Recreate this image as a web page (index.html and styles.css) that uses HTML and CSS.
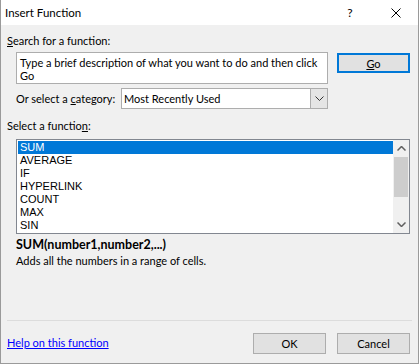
FILE: index.html
```html
<!DOCTYPE html>
<html lang="en">
<head>
    <meta charset="UTF-8">
    <title>Insert Function</title>
    <link rel="stylesheet" href="styles.css">
</head>
<body>
    <div class="window">
        <div class="titlebar">
            <span class="title">Insert Function</span>
            <span class="help">?</span>
            <span class="close">
                <svg width="10" height="10" viewBox="0 0 10 10"><path d="M0.5 0.5 L9.5 9.5 M9.5 0.5 L0.5 9.5" stroke="#000" stroke-width="1" fill="none"/></svg>
            </span>
        </div>
        <div class="content">
            <div class="label"><u>S</u>earch for a function:</div>
            <div class="search-row">
                <div class="textbox">Type a brief description of what you want to do and then click Go</div>
                <button class="btn btn-default"><u>G</u>o</button>
            </div>
            <div class="category-row">
                <span class="cat-label">Or select a <u>c</u>ategory:</span>
                <div class="select">
                    <span class="select-value">Most Recently Used</span>
                    <span class="select-arrow">
                        <svg width="9" height="5" viewBox="0 0 9 5"><path d="M0.5 0.5 L4.5 4.5 L8.5 0.5" stroke="#333" stroke-width="1" fill="none"/></svg>
                    </span>
                </div>
            </div>
            <div class="label list-label">Select a functio<u>n</u>:</div>
            <div class="listbox">
                <div class="items">
                    <div class="item selected">SUM</div>
                    <div class="item">AVERAGE</div>
                    <div class="item">IF</div>
                    <div class="item">HYPERLINK</div>
                    <div class="item">COUNT</div>
                    <div class="item">MAX</div>
                    <div class="item">SIN</div>
                </div>
                <div class="scrollbar">
                    <span class="arrow">
                        <svg width="9" height="5" viewBox="0 0 9 5"><path d="M0.5 4.5 L4.5 0.5 L8.5 4.5" stroke="#606060" stroke-width="1.5" fill="none"/></svg>
                    </span>
                    <span class="thumb"></span>
                    <span class="track"></span>
                    <span class="arrow">
                        <svg width="9" height="5" viewBox="0 0 9 5"><path d="M0.5 0.5 L4.5 4.5 L8.5 0.5" stroke="#606060" stroke-width="1.5" fill="none"/></svg>
                    </span>
                </div>
            </div>
            <div class="signature">SUM(number1,number2,...)</div>
            <div class="description">Adds all the numbers in a range of cells.</div>
        </div>
        <div class="footer">
            <a href="#" class="help-link">Help on this function</a>
            <div class="buttons">
                <button class="btn">OK</button>
                <button class="btn">Cancel</button>
            </div>
        </div>
    </div>
</body>
</html>
```

FILE: styles.css
```css
body {
    margin: 0;
    padding: 0;
    font-family: Lato, "Noto Sans", sans-serif;
    font-size: 11px;
    line-height: 15px;
    color: #000;
    background-color: #f0f0f0;
}
.window {
    width: 419px;
    height: 364px;
    box-sizing: border-box;
    border: 1px solid #9a9a9a;
    border-top: none;
    background-color: #f0f0f0;
    display: flex;
    flex-direction: column;
}
.titlebar {
    height: 25px;
    background-color: #fff;
    display: flex;
    align-items: center;
    padding-left: 4px;
}
.title {
    flex: 1;
    font-size: 11.5px;
}
.help {
    width: 12px;
    margin-right: 35px;
    text-align: center;
    font-size: 12px;
}
.close {
    display: flex;
    margin-right: 17px;
}
.content {
    padding: 8px 0 0 6px;
    flex: 1;
}
.label {
    line-height: 15px;
}
.search-row {
    display: flex;
    align-items: flex-start;
    margin-top: 4px;
    padding-left: 9px;
}
.textbox {
    width: 312px;
    height: 32px;
    box-sizing: border-box;
    border: 1px solid #adadad;
    background-color: #fff;
    padding: 3px 4px 0 3px;
    line-height: 13px;
}
.btn {
    width: 73px;
    height: 21px;
    box-sizing: border-box;
    border: 1px solid #adadad;
    background-color: #e1e1e1;
    font-family: inherit;
    font-size: 11px;
    padding: 0;
    color: #000;
}
.btn-default {
    margin-left: 9px;
    margin-top: 1px;
    height: 20px;
    border: 2px solid #0078d7;
}
.category-row {
    display: flex;
    align-items: center;
    margin-top: 4px;
    padding-left: 9px;
}
.cat-label {
    width: 105px;
}
.select {
    width: 207px;
    height: 21px;
    box-sizing: border-box;
    border: 1px solid #adadad;
    background-color: #fff;
    display: flex;
    align-items: center;
}
.select-value {
    flex: 1;
    padding-left: 2px;
}
.select-arrow {
    width: 17px;
    height: 19px;
    box-sizing: border-box;
    border-left: 1px solid #adadad;
    background-color: #e5e5e5;
    display: flex;
    align-items: center;
    justify-content: center;
}
.list-label {
    margin-top: 9px;
}
.listbox {
    margin: 6px 0 0 9px;
    width: 394px;
    height: 95px;
    box-sizing: border-box;
    border: 1px solid #828790;
    background-color: #fff;
    display: flex;
}
.items {
    flex: 1;
    padding: 1px 0 0 1px;
    font-family: "Liberation Sans", Arial, sans-serif;
    font-size: 11px;
}
.item {
    height: 13px;
    line-height: 13px;
    padding-left: 2px;
}
.selected {
    background-color: #0078d7;
    color: #fff;
}
.scrollbar {
    width: 16px;
    background-color: #f0f0f0;
    display: flex;
    flex-direction: column;
}
.arrow {
    height: 17px;
    display: flex;
    align-items: center;
    justify-content: center;
}
.thumb {
    height: 40px;
    margin: 0 1px;
    background-color: #cdcdcd;
}
.track {
    flex: 1;
}
.signature {
    margin: 3px 0 0 9px;
    font-weight: bold;
    font-size: 12.5px;
    line-height: 16px;
}
.description {
    margin-left: 9px;
    line-height: 15px;
}
.footer {
    margin: 0 6px;
    border-top: 1px solid #dcdcdc;
    height: 42px;
    display: flex;
    align-items: center;
    justify-content: space-between;
}
.help-link {
    color: #0000ff;
    margin-top: 1px;
}
.buttons {
    display: flex;
    gap: 11px;
    margin-top: 2px;
    padding-right: 2px;
}
```
